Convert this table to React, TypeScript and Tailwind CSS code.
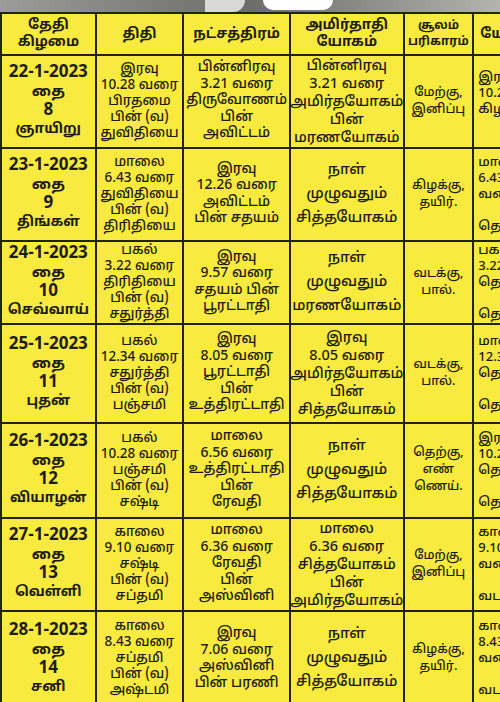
import React from "react";

type Row = {
  day: string[];
  thithi: string[];
  star: string[];
  yogam: string[];
  soolam: string[];
  extra: string[];
  h: string;
};

const rows: Row[] = [
  {
    day: ["22-1-2023", "தை", "8", "ஞாயிறு"],
    thithi: ["இரவு", "10.28 வரை", "பிரதமை", "பின் (வ)", "துவிதியை"],
    star: ["பின்னிரவு", "3.21 வரை", "திருவோணம்", "பின்", "அவிட்டம்"],
    yogam: ["பின்னிரவு", "3.21 வரை", "அமிர்தயோகம்", "பின்", "மரணயோகம்"],
    soolam: ["மேற்கு,", "இனிப்பு"],
    extra: ["இரவு", "10.28", "கிழக்கு", ""],
    h: "h-[93px]",
  },
  {
    day: ["23-1-2023", "தை", "9", "திங்கள்"],
    thithi: ["மாலை", "6.43 வரை", "துவிதியை", "பின் (வ)", "திரிதியை"],
    star: ["இரவு", "12.26 வரை", "அவிட்டம்", "பின் சதயம்"],
    yogam: ["நாள்", "முழுவதும்", "சித்தயோகம்"],
    soolam: ["கிழக்கு,", "தயிர்."],
    extra: ["மாலை", "6.43", "வரை", "", "தெற்கு"],
    h: "h-[93px]",
  },
  {
    day: ["24-1-2023", "தை", "10", "செவ்வாய்"],
    thithi: ["பகல்", "3.22 வரை", "திரிதியை", "பின் (வ)", "சதுர்த்தி"],
    star: ["இரவு", "9.57 வரை", "சதயம் பின்", "பூரட்டாதி"],
    yogam: ["நாள்", "முழுவதும்", "மரணயோகம்"],
    soolam: ["வடக்கு,", "பால்."],
    extra: ["பகல்", "3.22", "தெற்கு", "", "தெற்கு"],
    h: "h-[83px]",
  },
  {
    day: ["25-1-2023", "தை", "11", "புதன்"],
    thithi: ["பகல்", "12.34 வரை", "சதுர்த்தி", "பின் (வ)", "பஞ்சமி"],
    star: ["இரவு", "8.05 வரை", "பூரட்டாதி", "பின்", "உத்திரட்டாதி"],
    yogam: ["இரவு", "8.05 வரை", "அமிர்தயோகம்", "பின்", "சித்தயோகம்"],
    soolam: ["வடக்கு,", "பால்."],
    extra: ["மாலை", "12.34", "தெற்கு", "", "தெற்கு"],
    h: "h-[99px]",
  },
  {
    day: ["26-1-2023", "தை", "12", "வியாழன்"],
    thithi: ["பகல்", "10.28 வரை", "பஞ்சமி", "பின் (வ)", "சஷ்டி"],
    star: ["மாலை", "6.56 வரை", "உத்திரட்டாதி", "பின்", "ரேவதி"],
    yogam: ["நாள்", "முழுவதும்", "சித்தயோகம்"],
    soolam: ["தெற்கு,", "எண்", "ணெய்."],
    extra: ["இரவு", "10.28", "தெற்கு", "", "தெற்கு"],
    h: "h-[95px]",
  },
  {
    day: ["27-1-2023", "தை", "13", "வெள்ளி"],
    thithi: ["காலை", "9.10 வரை", "சஷ்டி", "பின் (வ)", "சப்தமி"],
    star: ["மாலை", "6.36 வரை", "ரேவதி", "பின்", "அஸ்வினி"],
    yogam: ["மாலை", "6.36 வரை", "சித்தயோகம்", "பின்", "அமிர்தயோகம்"],
    soolam: ["மேற்கு,", "இனிப்பு"],
    extra: ["காலை", "9.10", "வரை", "", "வடக்கு"],
    h: "h-[93px]",
  },
  {
    day: ["28-1-2023", "தை", "14", "சனி"],
    thithi: ["காலை", "8.43 வரை", "சப்தமி", "பின் (வ)", "அஷ்டமி"],
    star: ["இரவு", "7.06 வரை", "அஸ்வினி", "பின் பரணி"],
    yogam: ["நாள்", "முழுவதும்", "சித்தயோகம்"],
    soolam: ["கிழக்கு,", "தயிர்."],
    extra: ["காலை", "8.43", "வரை", "", "வடக்கு"],
    h: "h-[96px]",
  },
];

// one table cell, lines stacked and centred
const Cell = ({ lines, className }: { lines: string[]; className: string }) => (
  <div
    className={`flex flex-col items-center justify-center border-r-2 border-b-2 border-[#222211] text-center whitespace-nowrap overflow-hidden ${className}`}
  >
    {lines.map((l, i) => (
      <span key={i} className="block min-h-[16px]">
        {l}
      </span>
    ))}
  </div>
);

const DayCell = ({ lines }: { lines: string[] }) => (
  <div className="flex w-[95px] flex-col items-center justify-center border-r-2 border-b-2 border-[#222211] font-bold whitespace-nowrap overflow-hidden">
    <span className="text-[17px] leading-[20px]">{lines[0]}</span>
    <span className="text-[15px] leading-[19px]">{lines[1]}</span>
    <span className="text-[17px] leading-[18px]">{lines[2]}</span>
    <span className="text-[14px] leading-[20px]">{lines[3]}</span>
  </div>
);

const App = () => {
  return (
    <div
      className="w-[500px] h-[702px] overflow-hidden bg-[#f8ea3e] text-[#1c1c10]"
      style={{ fontFamily: '"Noto Sans Tamil", "Lohit Tamil", "Noto Sans", "Liberation Sans", sans-serif' }}
    >
      <div className="flex h-[12px] w-full bg-gradient-to-r from-[#9c9c98] via-[#6c6c69] to-[#b4b4af]">
        <div className="ml-[205px] h-[12px] w-[40px] rounded-br-[20px] bg-[#d9d9d6]" />
        <div className="ml-[18px] h-[10px] w-[70px] rounded-b-[30px] bg-white" />
      </div>
      <div className="w-[560px] border-t-2 border-l-2 border-[#222211]">
        <div className="flex h-[42px] text-[14px] leading-[17px] font-bold">
          <Cell lines={["தேதி", "கிழமை"]} className="w-[95px]" />
          <Cell lines={["திதி"]} className="w-[88px]" />
          <Cell lines={["நட்சத்திரம்"]} className="w-[107px]" />
          <Cell lines={["அமிர்தாதி", "யோகம்"]} className="w-[114px]" />
          <Cell lines={["சூலம்", "பரிகாரம்"]} className="w-[70px] text-[12px] leading-[16px]" />
          <Cell lines={["யோகினி"]} className="w-[86px] items-start pl-[6px]" />
        </div>
        {rows.map((r) => (
          <div key={r.day[0]} className={`flex font-medium ${r.h}`}>
            <DayCell lines={r.day} />
            <Cell lines={r.thithi} className="w-[88px] text-[13.5px] leading-[16px]" />
            <Cell lines={r.star} className="w-[107px] text-[14px] leading-[16.5px]" />
            <Cell
              lines={r.yogam}
              className={
                r.yogam.length === 3
                  ? "w-[114px] text-[15px] leading-[24px]"
                  : "w-[114px] text-[14.5px] leading-[18px]"
              }
            />
            <Cell lines={r.soolam} className="w-[70px] text-[12.5px] leading-[17px]" />
            <Cell lines={r.extra} className="w-[86px] text-[13px] leading-[16px] items-start pl-[4px]" />
          </div>
        ))}
      </div>
    </div>
  );
};

export default App;
